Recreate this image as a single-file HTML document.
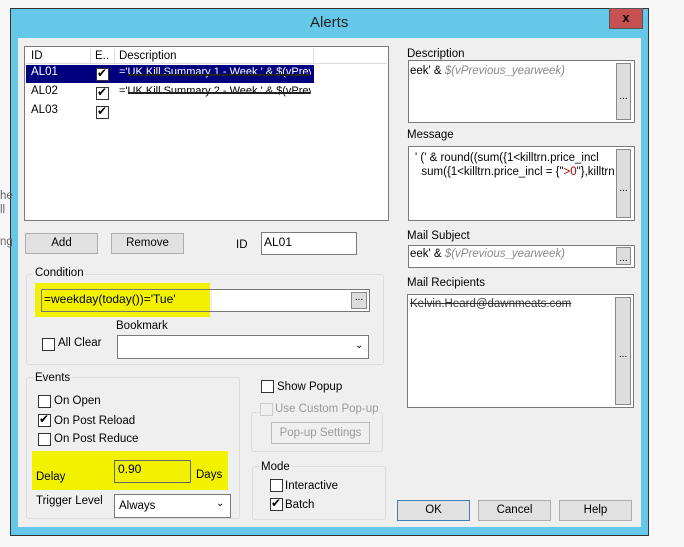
<!DOCTYPE html><html><head><style>
body{margin:0;width:684px;height:547px;background:#f7f7f7;position:relative;overflow:hidden;font-family:"Liberation Sans",Arial,sans-serif;font-size:11.5px;color:#000}
div,span{position:absolute;box-sizing:border-box}
.t{white-space:nowrap}
.box{background:#fff;border:1px solid #7a7a7a}
.btn{background:#e1e1e1;border:1px solid #adadad;text-align:center;line-height:18px}
.grp{border:1px solid #dcdcdc;border-radius:3px}
.cb{width:13px;height:13px;border:1px solid #333;background:#fff}
.dd{background:#ddd;border:1px solid #888;text-align:center;font-size:10px;line-height:10px}
.chk::after{content:"✔";position:absolute;left:0px;top:-3px;font-size:12px}
.y{background:#f2f200}
</style></head><body>
<div style="left:10px;top:8px;width:639px;height:528px;background:#65c8e8;border:1px solid #333"></div>
<div class="t" style="left:310px;top:14px;font-size:15px;color:#222">Alerts</div>
<div style="left:609px;top:8px;width:34px;height:21px;background:#c75050;border:1px solid #555;color:#000;font-weight:bold;text-align:center;font-size:13px;line-height:18px">x</div>
<div style="left:18px;top:38px;width:623px;height:489px;background:#efefef"></div>
<!-- list -->
<div class="box" style="left:24px;top:46px;width:365px;height:175px"></div>
<div style="left:26px;top:48px;width:361px;height:16px;background:#fff;border-bottom:1px solid #ddd"></div>
<div style="left:90px;top:48px;width:1px;height:16px;background:#ddd"></div>
<div style="left:114px;top:48px;width:1px;height:16px;background:#ddd"></div>
<div style="left:313px;top:48px;width:1px;height:16px;background:#ddd"></div>
<div class="t" style="left:31px;top:50px">ID</div><div class="t" style="left:95px;top:50px">E..</div><div class="t" style="left:119px;top:50px">Description</div>
<div style="left:26px;top:65px;width:288px;height:18px;background:#00007f"></div>
<div class="t" style="left:31px;top:66px;color:#fff">AL01</div>
<div class="t" style="left:31px;top:85px">AL02</div>
<div class="t" style="left:31px;top:104px">AL03</div>
<div class="cb chk" style="left:96px;top:68px"></div><div class="cb chk" style="left:96px;top:87px"></div><div class="cb chk" style="left:96px;top:106px"></div>
<div class="t" style="left:119px;top:66px;width:192px;overflow:hidden;color:#fff;font-size:11px">='UK Kill Summary 1 - Week ' &amp; $(vPrevious</div>
<div style="left:128px;top:74px;width:182px;height:2px;background:#222"></div>
<div class="t" style="left:119px;top:85px;width:192px;overflow:hidden;font-size:11px">='UK Kill Summary 2 - Week ' &amp; $(vPrevious</div>
<div style="left:128px;top:92px;width:182px;height:2px;background:#222"></div>
<div class="btn" style="left:25px;top:233px;width:73px;height:21px">Add</div>
<div class="btn" style="left:111px;top:233px;width:73px;height:21px">Remove</div>
<div class="t" style="left:236px;top:239px">ID</div>
<div class="box" style="left:261px;top:232px;width:96px;height:23px;padding:2px 2px;font-size:12px">AL01</div>
<!-- condition -->
<div class="grp" style="left:26px;top:274px;width:358px;height:91px"></div>
<div class="t" style="left:33px;top:267px;background:#efefef;padding:0 2px">Condition</div>
<div class="y" style="left:35px;top:283px;width:175px;height:34px"></div>
<div style="left:41px;top:289px;width:329px;height:23px;border:1px solid #777"></div>
<div class="t" style="left:44px;top:292px;font-size:12px">=weekday(today())='Tue'</div>
<div style="left:212px;top:290px;width:157px;height:21px;background:#fff"></div>
<div class="dd" style="left:351px;top:292px;width:16px;height:17px">...</div>
<div class="cb" style="left:42px;top:338px"></div><div class="t" style="left:58px;top:337px">All Clear</div>
<div class="t" style="left:116px;top:320px">Bookmark</div>
<div class="box" style="left:117px;top:335px;width:252px;height:24px"></div>
<div class="t" style="left:355px;top:340px;font-size:10px">⌄</div>
<!-- events -->
<div class="grp" style="left:26px;top:377px;width:214px;height:142px"></div>
<div class="t" style="left:33px;top:372px;background:#efefef;padding:0 2px">Events</div>
<div class="cb" style="left:38px;top:395px"></div><div class="t" style="left:54px;top:395px">On Open</div>
<div class="cb chk" style="left:38px;top:414px"></div><div class="t" style="left:54px;top:415px">On Post Reload</div>
<div class="cb" style="left:38px;top:433px"></div><div class="t" style="left:54px;top:433px">On Post Reduce</div>
<div class="y" style="left:32px;top:451px;width:196px;height:39px"></div>
<div class="t" style="left:36px;top:471px">Delay</div>
<div style="left:114px;top:460px;width:77px;height:23px;border:1px solid #666"></div>
<div class="t" style="left:118px;top:462px;font-size:12px">0.90</div>
<div class="t" style="left:196px;top:469px">Days</div>
<div class="t" style="left:36px;top:495px">Trigger Level</div>
<div class="box" style="left:114px;top:494px;width:117px;height:24px"></div>
<div class="t" style="left:119px;top:500px">Always</div><div class="t" style="left:216px;top:498px;font-size:10px">⌄</div>
<!-- popup -->
<div class="cb" style="left:261px;top:380px"></div><div class="t" style="left:277px;top:381px">Show Popup</div>
<div class="grp" style="left:251px;top:412px;width:132px;height:40px"></div>
<div class="cb" style="left:260px;top:403px;border-color:#ccc;background:#efefef"></div><div class="t" style="left:275px;top:403px;color:#999;background:#efefef">Use Custom Pop-up</div>
<div style="left:271px;top:422px;width:99px;height:22px;border:1px solid #bbb;color:#999;text-align:center;line-height:20px">Pop-up Settings</div>
<div class="grp" style="left:252px;top:466px;width:134px;height:54px"></div>
<div class="t" style="left:259px;top:461px;background:#efefef;padding:0 2px">Mode</div>
<div class="cb" style="left:270px;top:479px"></div><div class="t" style="left:285px;top:480px">Interactive</div>
<div class="cb chk" style="left:270px;top:498px"></div><div class="t" style="left:285px;top:499px">Batch</div>
<!-- right -->
<div class="t" style="left:407px;top:48px">Description</div>
<div class="box" style="left:408px;top:60px;width:227px;height:63px"></div>
<div class="t" style="left:410px;top:65px">eek' &amp; <i style="color:#888">$(vPrevious_yearweek)</i></div>
<div class="dd" style="left:616px;top:63px;width:15px;height:57px;padding-top:28px">...</div>
<div class="t" style="left:407px;top:129px">Message</div>
<div class="box" style="left:408px;top:146px;width:227px;height:75px"></div>
<div class="t" style="left:415px;top:151px;width:200px;overflow:hidden;line-height:14px">' (' &amp; round((sum({1&lt;killtrn.price_incl<br>&nbsp; sum({1&lt;killtrn.price_incl = {"<span style="position:static;color:#a00">&gt;0</span>"},killtrn</div>
<div class="dd" style="left:616px;top:149px;width:15px;height:69px;padding-top:34px">...</div>
<div class="t" style="left:407px;top:230px">Mail Subject</div>
<div class="box" style="left:408px;top:245px;width:227px;height:23px"></div>
<div class="t" style="left:410px;top:248px">eek' &amp; <i style="color:#888">$(vPrevious_yearweek)</i></div>
<div class="dd" style="left:616px;top:247px;width:15px;height:18px;padding-top:6px">...</div>
<div class="t" style="left:407px;top:277px">Mail Recipients</div>
<div class="box" style="left:407px;top:294px;width:227px;height:114px"></div>
<div class="t" style="left:410px;top:298px;color:#333;text-decoration:line-through">Kelvin.Heard@dawnmeats.com</div>
<div class="dd" style="left:615px;top:297px;width:16px;height:108px;padding-top:52px">...</div>
<div class="btn" style="left:397px;top:500px;width:73px;height:21px;border-color:#3c7fb1">OK</div>
<div class="btn" style="left:478px;top:500px;width:73px;height:21px">Cancel</div>
<div class="btn" style="left:559px;top:500px;width:73px;height:21px">Help</div>
<div class="t" style="left:0;top:190px;color:#666">he</div><div class="t" style="left:0;top:204px;color:#666">ll</div><div class="t" style="left:0;top:236px;color:#666">ng</div>
</body></html>
